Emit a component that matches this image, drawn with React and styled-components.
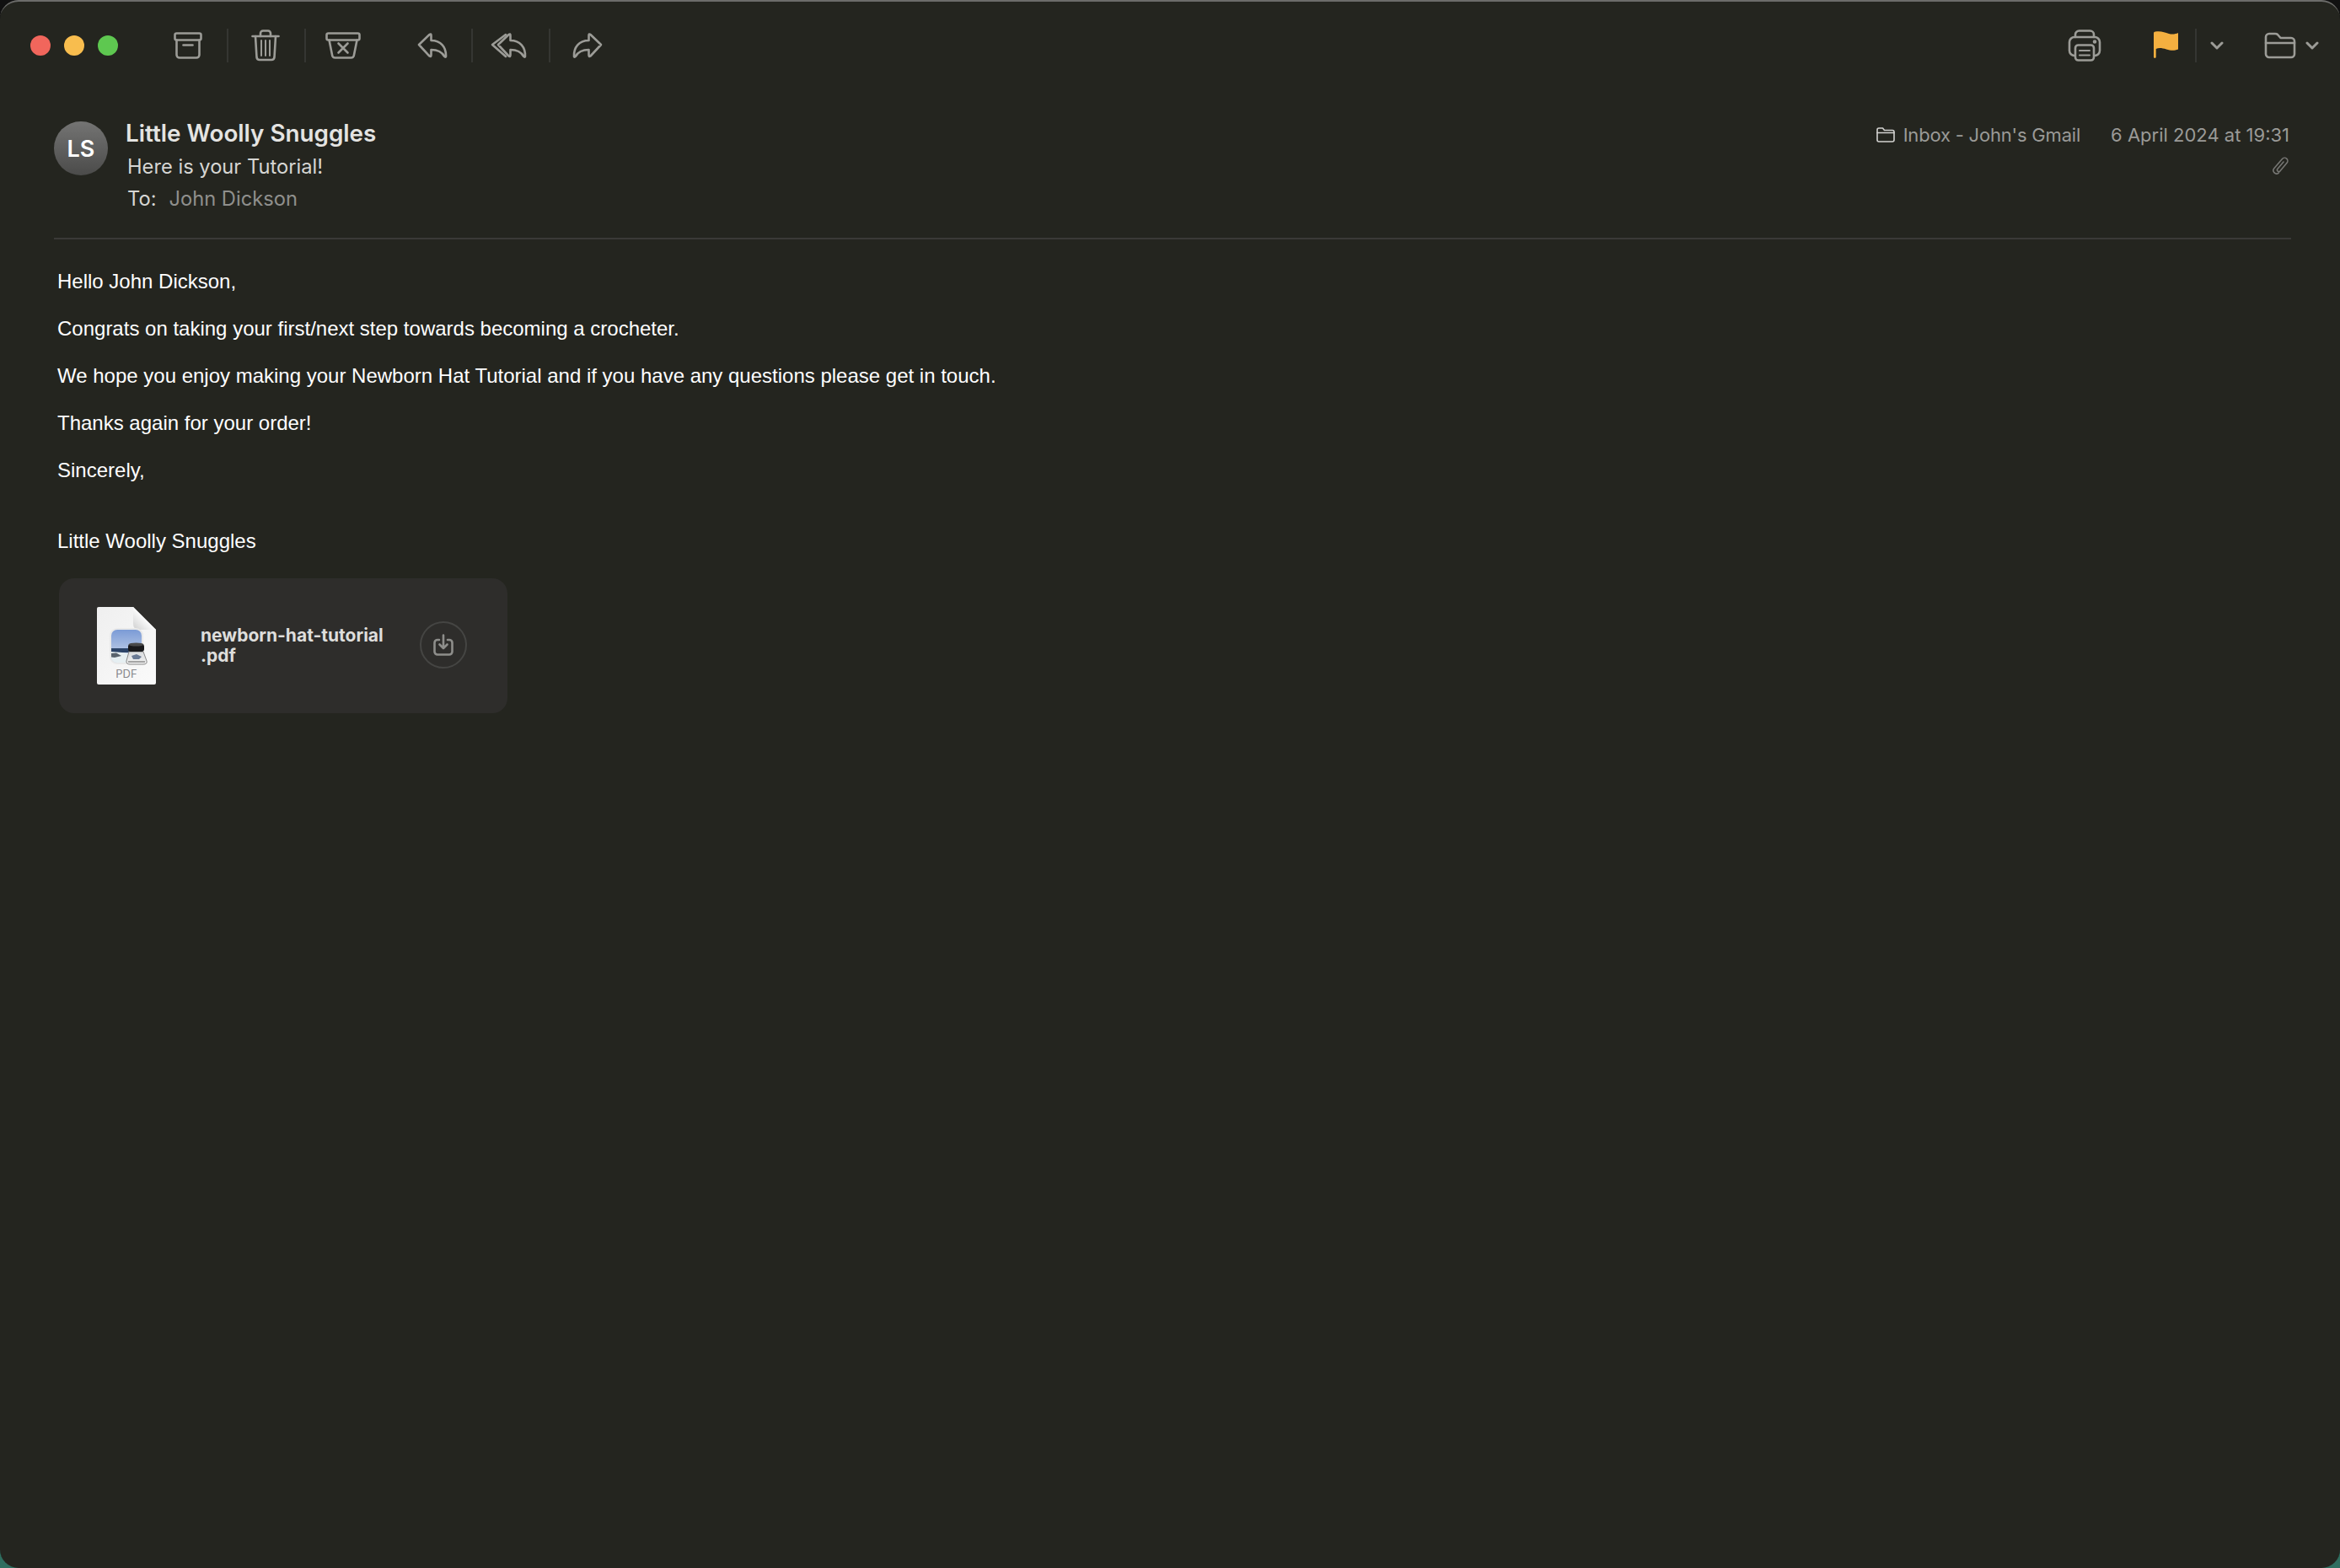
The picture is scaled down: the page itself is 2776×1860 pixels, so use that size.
import React from 'react'
import styled, { createGlobalStyle } from 'styled-components'

const GlobalStyle = createGlobalStyle`
    html, body {
        margin: 0;
        padding: 0;
        background: linear-gradient(#111 0 60%, #2f6f60 100%);
    }
`

const Window = styled.div`
    box-sizing: border-box;
    height: 1860px;
    padding-top: 1px;
    background: #24251f;
    border-radius: 22px;
    box-shadow: inset 0 3px 0 -1px #6c6c6a, inset 0 1px 0 #1a1a1a;
    overflow: hidden;
    font-family: Inter, 'Liberation Sans', sans-serif;
`

const Toolbar = styled.div`
    display: flex;
    align-items: center;
    height: 105px;
    padding: 0 14px 0 36px;
`

const Lights = styled.div`
    display: flex;
    gap: 16px;
    margin-right: 37px;
`

const Light = styled.span`
    width: 24px;
    height: 24px;
    border-radius: 50%;
    background: ${(p) => p.$color};
`

const Group = styled.div`
    display: flex;
    align-items: center;
    margin-right: ${(p) => p.$gap || 0}px;
`

const ToolButton = styled.div`
    display: flex;
    align-items: center;
    justify-content: center;
    width: 92px;
    height: 40px;
    & + & {
        box-shadow: inset 2px 0 0 #353632;
    }
`

const Spacer = styled.div`
    flex: 1;
`

const Icon = styled.svg`
    display: block;
    fill: none;
    stroke: ${(p) => p.$stroke || '#9c9c97'};
    stroke-width: ${(p) => p.$sw || 2.6};
    stroke-linecap: round;
    stroke-linejoin: round;
`

const FlagSlot = styled.div`
    display: flex;
    align-items: center;
    height: 40px;
    margin-left: 62px;
    padding-right: 19px;
    box-shadow: 2px 0 0 #353632;
`

const ChevronSlot = styled.div`
    margin: 0 48px 0 18px;
`

const TailChevron = styled.div`
    margin-left: 11px;
`

const Header = styled.div`
    display: flex;
    justify-content: space-between;
    margin: 0 58px 0 64px;
    padding: 33px 0 27px;
    border-bottom: 2px solid #3a3a37;
`

const Sender = styled.div`
    display: flex;
`

const Avatar = styled.div`
    display: flex;
    align-items: center;
    justify-content: center;
    width: 64px;
    height: 64px;
    margin: 5px 21px 0 0;
    border-radius: 50%;
    background: linear-gradient(#747473, #4b4b4a);
    color: #fff;
    font-size: 27px;
    font-weight: 600;
`

const Name = styled.div`
    margin-bottom: 2px;
    font-size: 27.800px;
    line-height: 38px;
    font-weight: 600;
    color: #e4e4e2;
`

const Line = styled.div`
    margin-left: 2px;
    font-size: 23.700px;
    line-height: 38px;
    color: #d6d6d3;
`

const Muted = styled.span`
    margin-left: 15px;
    color: #8f8f8c;
`

const Meta = styled.div`
    display: flex;
    flex-direction: column;
    align-items: flex-end;
    margin-right: 2px;
`

const MetaRow = styled.div`
    display: flex;
    align-items: center;
    height: 42px;
    font-size: 22px;
    color: #9a9a97;
`

const MetaFolder = styled.span`
    display: flex;
    align-items: center;
    gap: 10px;
    margin-right: 36px;
    letter-spacing: -0.200px;
`

const Clip = styled.div`
    margin: 4px 1px 0 0;
`

const Body = styled.div`
    padding: 36px 0 0 68px;
    font-family: 'Liberation Sans', Arial, sans-serif;
    font-size: 24px;
    line-height: 28px;
    color: #fff;
`

const Para = styled.p`
    margin: 0 0 ${(p) => p.$after || 28}px;
`

const Card = styled.div`
    display: flex;
    align-items: center;
    width: 532px;
    height: 160px;
    margin: 30px 0 0 2px;
    background: #2e2d2b;
    border-radius: 18px;
`

const DocIcon = styled.svg`
    display: block;
    margin: 0 53px 0 45px;
    flex: none;
`

const FileName = styled.div`
    width: 260px;
    font-family: Inter, sans-serif;
    font-size: 21px;
    line-height: 24px;
    font-weight: 700;
    color: #dededc;
    flex: none;
`

const Download = styled.div`
    display: flex;
    align-items: center;
    justify-content: center;
    box-sizing: border-box;
    width: 56px;
    height: 56px;
    margin-top: -2px;
    border: 2px solid #454543;
    border-radius: 50%;
`

const ReplyShape = 'M3 15 L15.5 3 Q17.5 1.5 17.5 4 V10 C29 10 35.5 18 35 29 Q34.3 30.2 33.3 29 C30 23 25 21 17.5 21 V27 Q17.5 30 15.5 28.5 Z'

const Chevron = () => (
    <Icon width="16" height="10" viewBox="0 0 16 10" $sw={3}>
        <path d="M2 2 L8 8 L14 2" />
    </Icon>
)

const PdfIcon = () => (
    <DocIcon width="70" height="92" viewBox="0 0 70 92">
        <defs>
            <linearGradient id="paper" x1="0" y1="0" x2="1" y2="1">
                <stop offset="0" stopColor="#efefef" />
                <stop offset="1" stopColor="#fafafa" />
            </linearGradient>
            <linearGradient id="fold" x1="0" y1="1" x2="1" y2="0">
                <stop offset="0" stopColor="#cfcfcf" />
                <stop offset="0.5" stopColor="#fbfbfb" />
            </linearGradient>
            <linearGradient id="sky" x1="0" y1="0" x2="0" y2="1">
                <stop offset="0" stopColor="#7b9bd6" />
                <stop offset="1" stopColor="#d2dcec" />
            </linearGradient>
            <linearGradient id="glass" x1="0" y1="0" x2="0" y2="1">
                <stop offset="0" stopColor="#d8dadc" />
                <stop offset="1" stopColor="#f2f2f2" />
            </linearGradient>
            <clipPath id="tile">
                <rect x="17" y="27" width="36" height="39" rx="7" />
            </clipPath>
        </defs>
        <path d="M2 0 H43 L70 27 V90 Q70 92 68 92 H2 Q0 92 0 90 V2 Q0 0 2 0 Z" fill="url(#paper)" />
        <path d="M43 0 L70 27 H50 Q43 27 43 20 Z" fill="url(#fold)" />
        <rect x="15" y="25" width="40" height="43" rx="9" fill="#e9e9e9" />
        <g clipPath="url(#tile)">
            <rect x="17" y="27" width="36" height="39" fill="url(#sky)" />
            <rect x="17" y="49" width="36" height="5" fill="#2c4468" />
            <path d="M17 53 L30 54 L53 57 V66 H17 Z" fill="#e6eff2" />
            <path d="M17 55 L23 54.500 L29 58 L21 60 L17 59.500 Z" fill="#5a646e" />
        </g>
        <path d="M38 53 L35 64 Q34.500 68 39 68 H55 Q60 68 59 64 L55 53 Z" fill="url(#glass)" stroke="#8a8a8a" strokeWidth="1" />
        <rect x="37" y="44" width="19" height="9" rx="3" fill="#1a1a1c" />
        <ellipse cx="46.500" cy="44.500" rx="9" ry="2" fill="#4a4a4a" />
        <path d="M41 58 L47 56 L53 59 L50 62 H43 Z" fill="#6a7a94" />
        <path d="M37 65 H57" stroke="#a4a4a4" strokeWidth="2" />
        <text x="35" y="84" textAnchor="middle" fontFamily="Inter, sans-serif" fontSize="13" fill="#86868a">
            PDF
        </text>
    </DocIcon>
)

const App = () => {
    return (
        <Window>
            <GlobalStyle />
            <Toolbar>
                <Lights>
                    <Light $color="#f1665c" />
                    <Light $color="#f8bd4e" />
                    <Light $color="#5ec850" />
                </Lights>
                <Group $gap={14}>
                    <ToolButton>
                        <Icon width="34" height="32" viewBox="0 0 34 32">
                            <rect x="1.500" y="1.500" width="31" height="8" rx="2" />
                            <path d="M3.500 9.500 V27 a3.500 3.500 0 0 0 3.500 3.500 h20 a3.500 3.500 0 0 0 3.500 -3.500 V9.500" />
                            <path d="M11.500 15.500 h11" />
                        </Icon>
                    </ToolButton>
                    <ToolButton>
                        <Icon width="34" height="38" viewBox="0 0 34 38">
                            <path d="M1.500 8 H32.500" />
                            <path d="M11 8 V4.500 a3 3 0 0 1 3 -3 h6 a3 3 0 0 1 3 3 V8" />
                            <path d="M5 8 L6.500 33 a3.500 3.500 0 0 0 3.500 3 h14 a3.500 3.500 0 0 0 3.500 -3 L29 8" />
                            <path d="M12 13 V31 M17 13 V31 M22 13 V31" strokeWidth="2" />
                        </Icon>
                    </ToolButton>
                    <ToolButton>
                        <Icon width="42" height="32" viewBox="0 0 42 32">
                            <rect x="1.500" y="1.500" width="39" height="8" rx="2" />
                            <path d="M4.500 9.500 L8 27 a3.500 3.500 0 0 0 3.500 3.500 h19 a3.500 3.500 0 0 0 3.500 -3.500 L37.500 9.500" />
                            <path d="M15.500 13.500 L26.500 24.500 M26.500 13.500 L15.500 24.500" />
                        </Icon>
                    </ToolButton>
                </Group>
                <Group>
                    <ToolButton>
                        <Icon width="38" height="32" viewBox="0 0 38 32">
                            <path d={ReplyShape} />
                        </Icon>
                    </ToolButton>
                    <ToolButton>
                        <Icon width="48" height="32" viewBox="0 0 48 32">
                            <path d="M19 3 L3 15 L19 29" />
                            <path d={ReplyShape} transform="translate(7 0)" />
                        </Icon>
                    </ToolButton>
                    <ToolButton>
                        <Icon width="38" height="32" viewBox="0 0 38 32">
                            <path d={ReplyShape} transform="translate(38 0) scale(-1 1)" />
                        </Icon>
                    </ToolButton>
                </Group>
                <Spacer />
                <Group $gap={11}>
                    <Icon width="40" height="38" viewBox="0 0 40 38">
                        <path d="M9 9 V6 a4.500 4.500 0 0 1 4.500 -4.500 h13 a4.500 4.500 0 0 1 4.500 4.500 V9" />
                        <rect x="2" y="9" width="36" height="22" rx="6" />
                        <rect x="9" y="18.500" width="22" height="18" rx="3.500" fill="#24251f" />
                        <path d="M14 25 H26 M14 30.500 H26" strokeWidth="2" />
                        <circle cx="32" cy="14.500" r="1" fill="#9c9c97" />
                    </Icon>
                    <FlagSlot>
                        <svg width="30" height="33" viewBox="0 0 30 33">
                            <path fill="#f4b040" d="M0 2 Q0 .5 2 .5 C9 -.5 13 1.500 18 3 C22 4 26 3.500 29 2 V21.500 C24 23.500 20 23 15 21.500 C10 20 6 19.500 2.700 21 V31 Q1.300 33 0 31 Z" />
                        </svg>
                    </FlagSlot>
                    <ChevronSlot>
                        <Chevron />
                    </ChevronSlot>
                    <Icon width="38" height="32" viewBox="0 0 38 32">
                        <path d="M2 6 a4 4 0 0 1 4 -4 h7 q2 0 3 1 l3.500 4 H32 a4 4 0 0 1 4 4 V26 a4 4 0 0 1 -4 4 H6 a4 4 0 0 1 -4 -4 Z" />
                        <path d="M2 13 H36" />
                    </Icon>
                    <TailChevron>
                        <Chevron />
                    </TailChevron>
                </Group>
            </Toolbar>
            <Header>
                <Sender>
                    <Avatar>LS</Avatar>
                    <div>
                        <Name>Little Woolly Snuggles</Name>
                        <Line>Here is your Tutorial!</Line>
                        <Line>
                            To:<Muted>John Dickson</Muted>
                        </Line>
                    </div>
                </Sender>
                <Meta>
                    <MetaRow>
                        <MetaFolder>
                            <Icon width="22" height="18" viewBox="0 0 22 18" $stroke="#d2d2d0" $sw={1.6}>
                                <path d="M1 3 a2 2 0 0 1 2 -2 h4.500 l2 2.500 H19 a2 2 0 0 1 2 2 V15 a2 2 0 0 1 -2 2 H3 a2 2 0 0 1 -2 -2 Z" />
                                <path d="M1 6.500 H21" />
                            </Icon>
                            Inbox - John's Gmail
                        </MetaFolder>
                        6 April 2024 at 19:31
                    </MetaRow>
                    <Clip>
                        <Icon width="20" height="22" viewBox="0 0 20 22" $stroke="#767673" $sw={1.6}>
                            <path d="M14 7 L6.800 15.500 a2 2 0 0 0 3 2.600 L18 8.200 a3.600 3.600 0 0 0 -5.500 -4.700 L2.800 14.800 a3.800 3.800 0 0 0 5.400 5.300" />
                        </Icon>
                    </Clip>
                </Meta>
            </Header>
            <Body>
                <Para>Hello John Dickson,</Para>
                <Para>Congrats on taking your first/next step towards becoming a crocheter.</Para>
                <Para>We hope you enjoy making your Newborn Hat Tutorial and if you have any questions please get in touch.</Para>
                <Para>Thanks again for your order!</Para>
                <Para $after={56}>Sincerely,</Para>
                <Para $after={0}>Little Woolly Snuggles</Para>
                <Card>
                    <PdfIcon />
                    <FileName>
                        newborn-hat-tutorial
                        <br />
                        .pdf
                    </FileName>
                    <Download>
                        <Icon width="24" height="26" viewBox="0 0 24 26" $stroke="#8e8e8b" $sw={2.6}>
                            <path d="M7 7 H5 a3.500 3.500 0 0 0 -3.500 3.500 V21 a3.500 3.500 0 0 0 3.500 3.500 H19 a3.500 3.500 0 0 0 3.500 -3.500 V10.500 a3.500 3.500 0 0 0 -3.500 -3.500 H17" />
                            <path d="M12 1.500 V17 M7.500 12.500 L12 17 L16.500 12.500" />
                        </Icon>
                    </Download>
                </Card>
            </Body>
        </Window>
    )
}

export default App
